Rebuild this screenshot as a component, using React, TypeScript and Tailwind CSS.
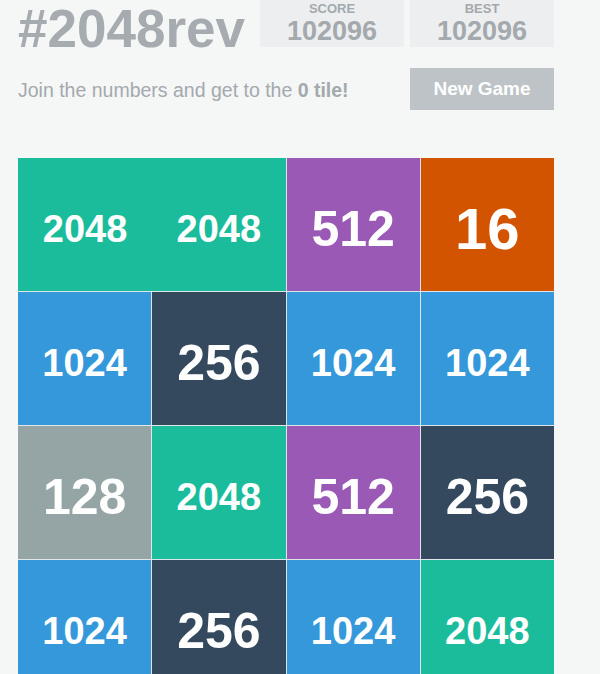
import React from 'react';

type Tile = { value: number; color: string; size: string; joinRight?: boolean };

const COLORS: Record<number, string> = {
  16: 'bg-[#d35400]',
  128: 'bg-[#95a5a6]',
  256: 'bg-[#34495e]',
  512: 'bg-[#9b59b6]',
  1024: 'bg-[#3498db]',
  2048: 'bg-[#1abc9c]',
};

const sizeFor = (v: number) => {
  if (v >= 1000) return 'text-[38px]';
  if (v >= 100) return 'text-[50px]';
  return 'text-[58px]';
};

const BOARD: number[][] = [
  [2048, 2048, 512, 16],
  [1024, 256, 1024, 1024],
  [128, 2048, 512, 256],
  [1024, 256, 1024, 2048],
];

const tiles: Tile[] = BOARD.flatMap((row, r) =>
  row.map((value, c) => ({
    value,
    color: COLORS[value],
    size: sizeFor(value),
    // the two 2048s on top sit flush with no seam between them
    joinRight: r === 0 && c === 0,
  }))
);

const ScoreBox = ({ label, value }: { label: string; value: string }) => (
  <div className="w-[144px] h-[47px] bg-[#eceef0] flex flex-col items-center pt-[1px]">
    <span className="text-[13px] font-bold leading-[15px] text-[#a3a9ad]">{label}</span>
    <span className="text-[27px] font-bold leading-[30px] text-[#a3a9ad]">{value}</span>
  </div>
);

export default function App() {
  return (
    <div
      className="min-h-[674px] w-[600px] bg-[#f5f6f6] overflow-hidden"
      style={{ fontFamily: '"Liberation Sans", Arial, sans-serif' }}
    >
      <div className="w-[536px] ml-[18px]">
        <div className="flex items-start h-[54px]">
          <h1 className="text-[53px] font-bold leading-[57px] text-[#a5abaf]">
            #2048rev
          </h1>
          <div className="ml-auto flex gap-[6px]">
            <ScoreBox label="SCORE" value="102096" />
            <ScoreBox label="BEST" value="102096" />
          </div>
        </div>

        <div className="flex items-center mt-[14px]">
          <p className="text-[19.5px] text-[#a3a9ad] pt-[4px]">
            Join the numbers and get to the <b className="font-bold">0 tile!</b>
          </p>
          <button className="ml-auto w-[144px] h-[42px] bg-[#bdc3c7] text-white text-[19px] font-bold">
            New Game
          </button>
        </div>

        <div className="mt-[48px] grid grid-cols-4 gap-px bg-[#dfe6ea]">
          {tiles.map((t, i) => (
            <div
              key={i}
              className={`${t.color} h-[133px] flex items-center justify-center ${t.joinRight ? 'mr-[-1px] relative z-10' : ''}`}
            >
              <span className={`${t.size} font-bold text-white leading-none pt-[8px]`}>{t.value}</span>
            </div>
          ))}
        </div>
      </div>
    </div>
  );
}
